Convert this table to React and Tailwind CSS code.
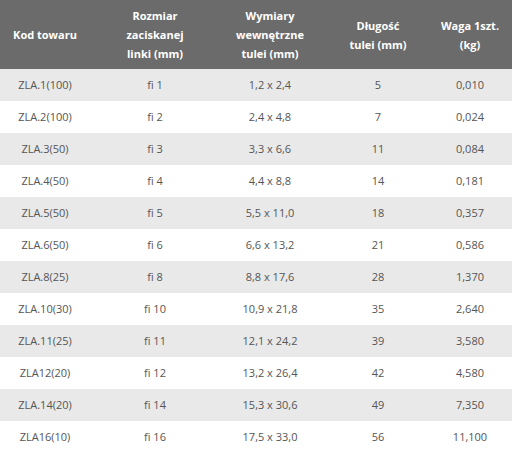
const headers = [
  ['Kod towaru'],
  ['Rozmiar', 'zaciskanej', 'linki (mm)'],
  ['Wymiary', 'wewnętrzne', 'tulei (mm)'],
  ['Długość', 'tulei (mm)'],
  ['Waga 1szt.', '(kg)'],
];

const rows = [
  ['ZLA.1(100)', 'fi 1', '1,2 x 2,4', '5', '0,010'],
  ['ZLA.2(100)', 'fi 2', '2,4 x 4,8', '7', '0,024'],
  ['ZLA.3(50)', 'fi 3', '3,3 x 6,6', '11', '0,084'],
  ['ZLA.4(50)', 'fi 4', '4,4 x 8,8', '14', '0,181'],
  ['ZLA.5(50)', 'fi 5', '5,5 x 11,0', '18', '0,357'],
  ['ZLA.6(50)', 'fi 6', '6,6 x 13,2', '21', '0,586'],
  ['ZLA.8(25)', 'fi 8', '8,8 x 17,6', '28', '1,370'],
  ['ZLA.10(30)', 'fi 10', '10,9 x 21,8', '35', '2,640'],
  ['ZLA.11(25)', 'fi 11', '12,1 x 24,2', '39', '3,580'],
  ['ZLA12(20)', 'fi 12', '13,2 x 26,4', '42', '4,580'],
  ['ZLA.14(20)', 'fi 14', '15,3 x 30,6', '49', '7,350'],
  ['ZLA16(10)', 'fi 16', '17,5 x 33,0', '56', '11,100'],
];

const cols = 'grid grid-cols-[90px_130px_100px_116px_68px]';

export default function App() {
  return (
    <div className="w-[512px] h-[453px] overflow-hidden bg-white font-['Open_Sans',sans-serif]">
      <div className={`${cols} h-[69px] bg-[#6b6b6b] text-white text-[11px] font-bold leading-[19px]`}>
        {headers.map((h, i) => (
          <div key={i} className="flex flex-col items-center justify-center text-center">
            {h.map((line) => (
              <span key={line}>{line}</span>
            ))}
          </div>
        ))}
      </div>
      {rows.map((r, i) => (
        <div
          key={i}
          className={`${cols} h-[32px] items-center text-[11px] text-[#555] ${i % 2 === 0 ? 'bg-[#e9e9e9]' : 'bg-white'}`}
        >
          {r.map((c, j) => (
            <div key={j} className="text-center">{c}</div>
          ))}
        </div>
      ))}
    </div>
  );
}
